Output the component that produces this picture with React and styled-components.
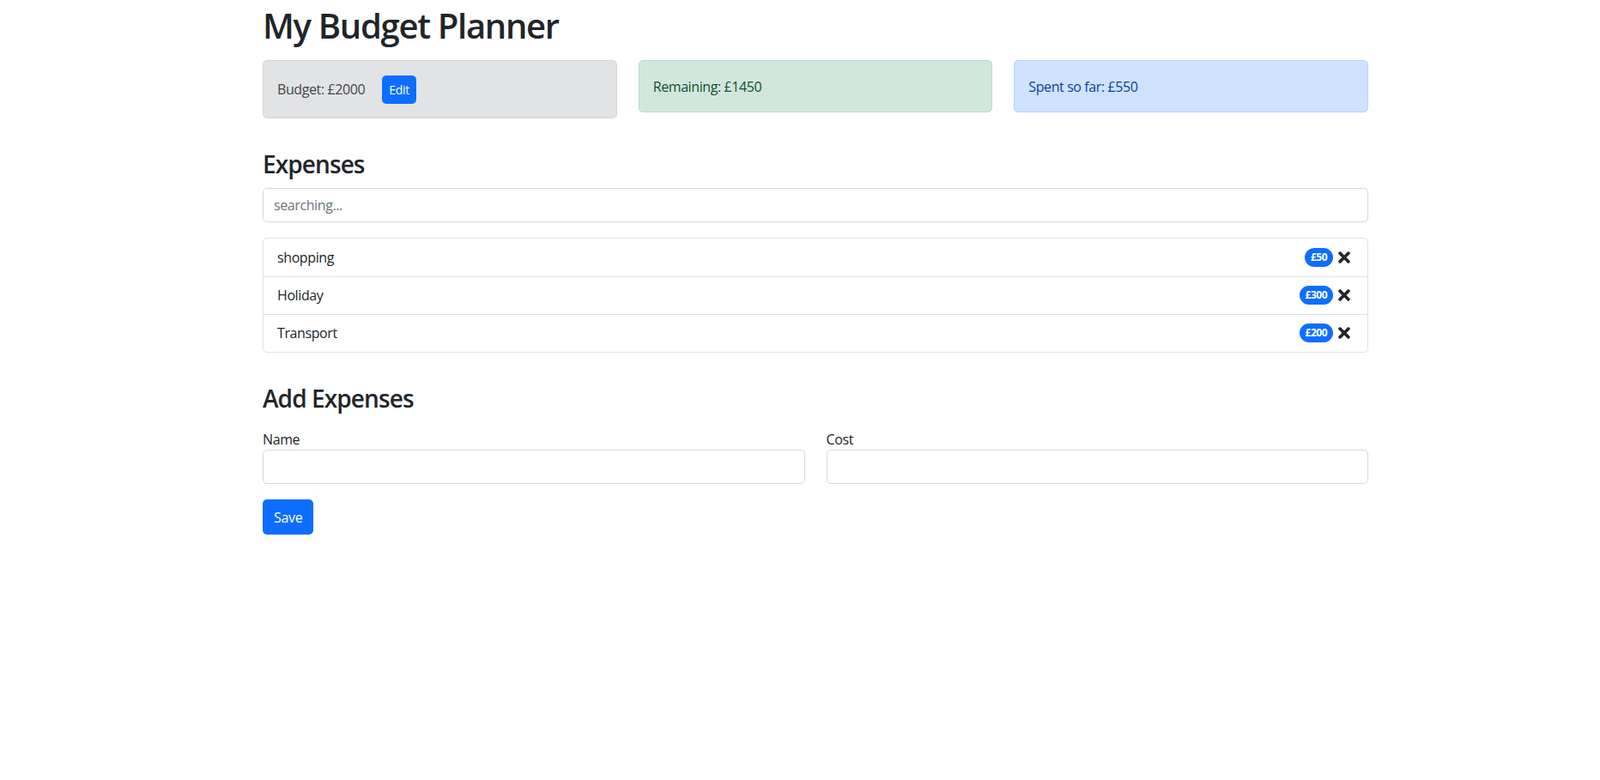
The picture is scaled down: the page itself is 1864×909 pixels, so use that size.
import React, { useState } from 'react';
import styled, { createGlobalStyle } from 'styled-components';
import { FaTimes } from 'react-icons/fa';

// page defaults
const GlobalStyle = createGlobalStyle`
  * {
    box-sizing: border-box;
  }

  body {
    margin: 0;
    background: #fff;
    color: #212529;
    font-family: 'Open Sans', 'Noto Sans', sans-serif;
    font-size: 16px;
    line-height: 24px;
    letter-spacing: -0.4px;
  }
`;

// alert colours
const ALERT = {
  secondary: { bg: '#e2e3e5', border: '#d3d6d8', color: '#41464b' },
  success: { bg: '#d1e7dd', border: '#badbcc', color: '#0f5132' },
  primary: { bg: '#cfe2ff', border: '#b6d4fe', color: '#084298' },
};

const Container = styled.div`
  width: 1288px;
  margin: 0 0 0 306px;
  padding-bottom: 40px;
`;

const Title = styled.h1`
  margin: 6px 0 0;
  font-size: 40px;
  font-weight: 600;
  line-height: 48px;
  letter-spacing: -1.3px;
`;

const CardRow = styled.div`
  display: grid;
  grid-template-columns: repeat(3, 1fr);
  gap: 25px;
  align-items: start;
  margin-top: 16px;
`;

const Card = styled.div`
  display: flex;
  align-items: center;
  padding: 17.5px 16px;
  border: 1px solid ${({ $variant }) => ALERT[$variant].border};
  border-radius: 5px;
  background: ${({ $variant }) => ALERT[$variant].bg};
  color: ${({ $variant }) => ALERT[$variant].color};
`;

const Button = styled.button`
  border: 0;
  border-radius: 5px;
  background: #0d6efd;
  color: #fff;
  font-family: inherit;
  letter-spacing: -0.3px;
  cursor: pointer;

  &:hover {
    background: #0b5ed7;
  }
`;

const EditButton = styled(Button)`
  height: 33px;
  margin: -1px 0 -1px 20px;
  padding: 0 8px;
  font-size: 14px;
`;

const SaveButton = styled(Button)`
  height: 41px;
  margin-top: 18px;
  padding: 0 13px;
  font-size: 16px;
`;

const SectionTitle = styled.h3`
  margin: 37px 0 0;
  font-size: 28px;
  font-weight: 600;
  line-height: 33.6px;
  letter-spacing: -0.9px;
`;

const Input = styled.input`
  display: block;
  width: 100%;
  height: 40px;
  padding: 0 12px;
  border: 1px solid #d5d8dc;
  border-radius: 5px;
  background: #fff;
  color: #212529;
  font-family: inherit;
  font-size: 16px;
  letter-spacing: -0.4px;
  outline: none;

  &::placeholder {
    color: #6c757d;
  }

  &:focus {
    border-color: #86b7fe;
    box-shadow: 0 0 0 4px rgba(13, 110, 253, 0.25);
  }
`;

const SearchInput = styled(Input)`
  margin-top: 10px;
`;

const List = styled.ul`
  margin: 18px 0 0;
  padding: 0;
  list-style: none;
  border: 1px solid #dfe1e3;
  border-radius: 5px;
`;

const Item = styled.li`
  display: flex;
  align-items: center;
  justify-content: space-between;
  min-height: 44px;
  padding: 0 17px 0 16px;

  & + & {
    border-top: 1px solid #dfe1e3;
  }
`;

const ItemRight = styled.div`
  display: flex;
  align-items: center;
  gap: 3px;
`;

const Badge = styled.span`
  display: inline-flex;
  align-items: center;
  height: 22px;
  padding: 0 7px;
  border-radius: 11px;
  background: #0d6efd;
  color: #fff;
  font-size: 12px;
  font-weight: 700;
  letter-spacing: -0.5px;
`;

const DeleteIcon = styled(FaTimes)`
  display: block;
  color: #212529;
  cursor: pointer;
`;

const FormRow = styled.div`
  display: grid;
  grid-template-columns: 1fr 1fr;
  gap: 25px;
  margin-top: 19px;
`;

const Label = styled.label`
  display: block;
  line-height: 24px;
`;

const initialExpenses = [
  { id: 1, name: 'shopping', cost: 50 },
  { id: 2, name: 'Holiday', cost: 300 },
  { id: 3, name: 'Transport', cost: 200 },
];

const App = () => {
  const [budget] = useState(2000);
  const [expenses, setExpenses] = useState(initialExpenses);
  const [search, setSearch] = useState('');
  const [name, setName] = useState('');
  const [cost, setCost] = useState('');

  const spent = expenses.reduce((total, item) => total + item.cost, 0);
  const shown = expenses.filter((item) =>
    item.name.toLowerCase().includes(search.toLowerCase())
  );

  const handleSave = (e) => {
    e.preventDefault();
    if (!name || !cost) return;
    setExpenses([...expenses, { id: Date.now(), name, cost: Number(cost) }]);
    setName('');
    setCost('');
  };

  return (
    <>
      <GlobalStyle />
      <Container>
        <Title>My Budget Planner</Title>
        <CardRow>
          <Card $variant="secondary">
            <span>Budget: £{budget}</span>
            <EditButton type="button">Edit</EditButton>
          </Card>
          <Card $variant="success">
            <span>Remaining: £{budget - spent}</span>
          </Card>
          <Card $variant="primary">
            <span>Spent so far: £{spent}</span>
          </Card>
        </CardRow>

        <SectionTitle>Expenses</SectionTitle>
        <SearchInput
          type="text"
          placeholder="searching..."
          value={search}
          onChange={(e) => setSearch(e.target.value)}
        />
        <List>
          {shown.map((item) => (
            <Item key={item.id}>
              <span>{item.name}</span>
              <ItemRight>
                <Badge>£{item.cost}</Badge>
                <DeleteIcon
                  size={20}
                  onClick={() =>
                    setExpenses(expenses.filter((e) => e.id !== item.id))
                  }
                />
              </ItemRight>
            </Item>
          ))}
        </List>

        <SectionTitle>Add Expenses</SectionTitle>
        <form onSubmit={handleSave}>
          <FormRow>
            <div>
              <Label htmlFor="name">Name</Label>
              <Input
                id="name"
                type="text"
                value={name}
                onChange={(e) => setName(e.target.value)}
              />
            </div>
            <div>
              <Label htmlFor="cost">Cost</Label>
              <Input
                id="cost"
                type="text"
                value={cost}
                onChange={(e) => setCost(e.target.value)}
              />
            </div>
          </FormRow>
          <SaveButton type="submit">Save</SaveButton>
        </form>
      </Container>
    </>
  );
};

export default App;
